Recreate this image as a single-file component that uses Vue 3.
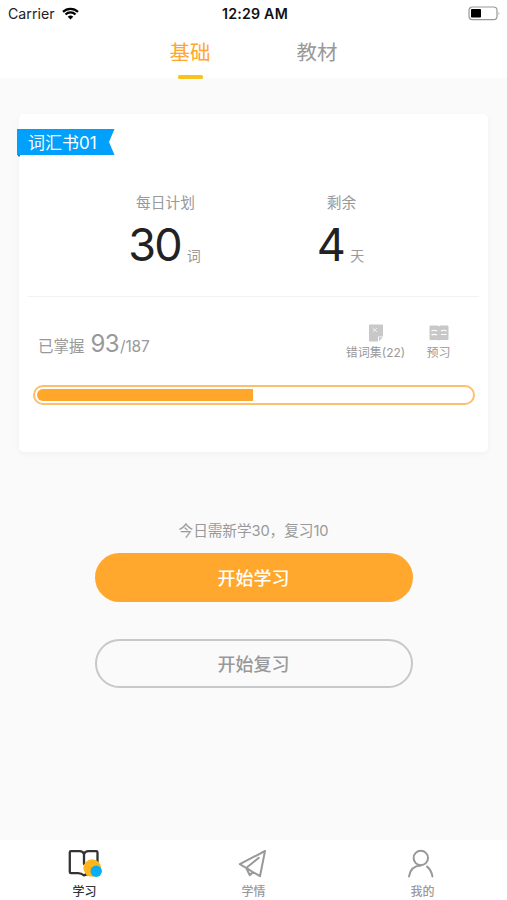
<template>
    <div class="page">
        <div class="status-bar">
            <div class="carrier">
                <span>Carrier</span>
                <svg class="wifi" viewBox="0 0 17 13">
                    <path d="M1 4.9 A10.6 10.6 0 0 1 16 4.9" />
                    <path d="M3.5 7.5 A7.1 7.1 0 0 1 13.5 7.5" />
                    <path class="dot" d="M8.5 12.6 L5.7 9.8 A4 4 0 0 1 11.3 9.8 Z" />
                </svg>
            </div>
            <span class="time">12:29 AM</span>
            <svg class="battery" viewBox="0 0 33 15">
                <rect class="shell" x="1" y="1" width="28" height="12.6" rx="3.4" />
                <rect x="3" y="3" width="10" height="8.6" rx="0.8" />
                <path class="cap" d="M30.6 5.4 Q32.4 7.3 30.6 9.2 Z" />
            </svg>
        </div>

        <div class="tabs">
            <div v-for="tab in tabs" :key="tab" class="tab" :class="{ active: tab === activeTab }"
                @click="activeTab = tab">
                <span>{{ tab }}</span>
                <i></i>
            </div>
        </div>

        <div class="card">
            <div class="ribbon-row">
                <svg class="ribbon" viewBox="0 0 98 28">
                    <path class="fold" d="M0 25 H3 V27.6 H1.4 Z" />
                    <path class="band" d="M0 0 H97.5 L92 13 L97.5 26 H0 Z" />
                </svg>
                <span class="book-name">词汇书01</span>
            </div>
            <div class="stats">
                <div v-for="item in stats" :key="item.label" class="stat">
                    <p class="stat-label">{{ item.label }}</p>
                    <p class="stat-value"><b>{{ item.value }}</b><span>{{ item.unit }}</span></p>
                </div>
            </div>
            <div class="detail">
                <div class="mastered">
                    <span class="mastered-label">已掌握</span>
                    <span class="mastered-count">{{ mastered }}</span>
                    <span class="mastered-total">/{{ total }}</span>
                </div>
                <div class="tools">
                    <div class="tool">
                        <svg class="tool-icon" viewBox="0 0 20 18">
                            <path class="solid" d="M4 0.5 H16 Q17 0.5 17 1.5 V12.4 H13 Q12 12.4 12 13.4 V17.4 H4 Q3 17.4 3 16.4 V1.5 Q3 0.5 4 0.5 Z" />
                            <path class="solid" d="M13 13.2 H16.8 L13 17.2 Z" />
                            <path class="cut thin" d="M6.6 4 L11 8 M11 4 L6.6 8" />
                        </svg>
                        <span>错词集({{ wrongCount }})</span>
                    </div>
                    <div class="tool preview">
                        <svg class="tool-icon" viewBox="0 0 20 18">
                            <path class="solid" d="M1.5 1.5 H8.8 L10 2.4 L11.2 1.5 H18.5 Q19.5 1.5 19.5 2.5 V15 Q19.5 16 18.5 16 H11.2 L10 16.6 L8.8 16 H1.5 Q0.5 16 0.5 15 V2.5 Q0.5 1.5 1.5 1.5 Z" />
                            <path class="cut" d="M2.5 6.9 Q5 5.6 8 6.9 M12 6.9 Q15 5.6 17.5 6.9 M2.5 10.9 Q5 9.7 8 10.9 M12 10.5 H17.5" />
                        </svg>
                        <span>预习</span>
                    </div>
                </div>
            </div>
            <div class="progress">
                <div class="progress-inner" :style="{ width: percent + '%' }"></div>
            </div>
        </div>

        <p class="today">今日需新学30，复习10</p>
        <button class="btn primary">开始学习</button>
        <button class="btn plain">开始复习</button>

        <div class="tab-bar">
            <div class="nav current">
                <svg class="nav-icon" viewBox="0 0 36 32">
                    <path d="M17 7 Q16 4.2 12.5 4.2 H4 Q2.8 4.2 2.8 5.4 V25 Q2.8 26.2 4 26.2 H11 Q14.5 26.4 17 28.4 Q19 27.4 21 27 M17 7 Q18 4.2 21.5 4.2 H29.3 Q30.5 4.2 30.5 5.4 V15 M17 7 V17" />
                    <circle class="sun" cx="25.2" cy="21" r="8.8" />
                    <circle class="drop" cx="29.2" cy="24.2" r="5.7" />
                </svg>
                <span>学习</span>
            </div>
            <div class="nav">
                <svg class="nav-icon" viewBox="0 0 36 32">
                    <path d="M29 4 L3.8 17.2 L10.2 21 L13.8 28.2 L16.8 25 L24 29.2 Z M10.2 21 L22.8 10.8 M11.8 21.8 L16.8 25" />
                </svg>
                <span>学情</span>
            </div>
            <div class="nav">
                <svg class="nav-icon" viewBox="0 0 36 32">
                    <circle cx="15.8" cy="11" r="7.2" />
                    <path d="M4 29.4 Q5.4 19 15.8 18.4 M22 19.6 Q26.4 23 27.4 29.4" />
                </svg>
                <span>我的</span>
            </div>
        </div>
    </div>
</template>

<script setup>
import { ref, computed } from 'vue';

const tabs = ['基础', '教材'];
const activeTab = ref('基础');

const stats = [
    { label: '每日计划', value: 30, unit: '词' },
    { label: '剩余', value: 4, unit: '天' }
];

const mastered = ref(93);
const total = ref(187);
const wrongCount = ref(22);
const percent = computed(() => mastered.value / total.value * 100);
</script>

<style>
body {
    background-color: #fafafa;
}
</style>

<style scoped>
.page {
    height: 900px;
    display: flex;
    flex-direction: column;
    align-items: center;
    overflow: hidden;
    background-color: #fafafa;
    color: #999;
    font-family: Inter, "Noto Sans CJK SC", sans-serif;
}

.page * {
    box-sizing: border-box;
}

p {
    margin: 0;
}

.status-bar {
    width: 100%;
    height: 28px;
    flex: none;
    display: grid;
    grid-template-columns: 1fr auto 1fr;
    align-items: center;
    padding: 0 6px 0 8px;
    background-color: #fff;
    color: #222;
    font-size: 14.2px;
    line-height: 28px;
}

.carrier {
    display: flex;
    align-items: center;
    gap: 7px;
}

.wifi {
    width: 17px;
    height: 13px;
    margin-top: -2px;
    fill: none;
    stroke: #000;
    stroke-width: 2.2;
}

.wifi .dot {
    fill: #000;
    stroke: none;
}

.time {
    margin-left: 1px;
    color: #111;
    font-weight: 600;
    letter-spacing: 0.2px;
}

.battery {
    width: 33px;
    height: 15px;
    justify-self: end;
    margin-top: -1px;
}

.battery .shell {
    fill: none;
    stroke: #999;
    stroke-width: 1.2;
}

.battery .cap {
    fill: #999;
}

.tabs {
    width: 100%;
    height: 50px;
    flex: none;
    display: flex;
    justify-content: center;
    background-color: #fff;
}

.tab {
    width: 127px;
    display: flex;
    flex-direction: column;
    align-items: center;
    font-size: 20.5px;
    line-height: 47px;
}

.tab span {
    height: 47px;
    padding-top: 1px;
}

.tab i {
    width: 25px;
    height: 4px;
    flex: none;
    border-radius: 1.5px;
}

.active {
    color: #ffa62b;
}

.active i {
    background-color: #f8c31c;
}

.card {
    width: 469px;
    height: 338px;
    flex: none;
    margin-top: 36px;
    padding-top: 15px;
    border-radius: 5px;
    background-color: #fff;
    box-shadow: 0 2px 7px rgba(0, 0, 0, 0.04);
}

.ribbon-row {
    display: grid;
    width: 98px;
    height: 28px;
    margin-left: -2px;
    line-height: 29px;
    color: #fff;
    font-size: 17px;
}

.ribbon-row > * {
    grid-area: 1 / 1;
}

.ribbon {
    width: 98px;
    height: 28px;
}

.band {
    fill: #00a0fc;
}

.fold {
    fill: #0b73b8;
}

.book-name {
    margin-left: 11px;
    white-space: nowrap;
    z-index: 1;
}

.stats {
    height: 140px;
    margin: 0 9px;
    padding-top: 34px;
    display: flex;
    justify-content: center;
    border-bottom: 1px solid #f2f2f2;
}

.stat {
    width: 176px;
    text-align: center;
}

.stat-label {
    font-size: 14.7px;
    line-height: 24px;
}

.stat-value {
    display: flex;
    justify-content: center;
    align-items: baseline;
    gap: 6px;
    margin: 3px 2px 0 0;
    line-height: 54px;
}

.stat-value b {
    color: #222;
    font-size: 45px;
    font-weight: 400;
    letter-spacing: -1.8px;
}

.stat-value span {
    font-size: 14px;
}

.detail {
    height: 88px;
    padding: 27px 20px 0 19px;
    display: flex;
    justify-content: space-between;
}

.mastered {
    line-height: 40px;
    font-size: 15.5px;
}

.mastered-count {
    margin: 0 1px 0 6px;
    font-size: 24px;
    letter-spacing: -0.6px;
}

.mastered-total {
    letter-spacing: -0.2px;
}

.tools {
    display: flex;
}

.tool {
    width: 67px;
    display: flex;
    flex-direction: column;
    align-items: center;
    font-size: 12px;
    line-height: 22px;
    white-space: nowrap;
}

.preview {
    width: 59px;
}

.tool-icon {
    width: 20px;
    height: 18px;
    flex: none;
}

.solid {
    fill: #c8c8c8;
}

.cut {
    fill: none;
    stroke: #fff;
    stroke-width: 1.2;
}

.thin {
    stroke-width: 0.7;
}

.progress {
    height: 20px;
    margin: 0 13px 0 14px;
    padding: 2px;
    border: 2px solid #fdbf6c;
    border-radius: 10px;
}

.progress-inner {
    height: 100%;
    border-radius: 6px 0 0 6px;
    background-color: #ffa62b;
}

.today {
    margin-top: 68px;
    font-size: 14.7px;
    line-height: 22px;
    letter-spacing: -0.1px;
}

.btn {
    width: 318px;
    height: 49px;
    flex: none;
    padding: 0;
    border: none;
    border-radius: 25px;
    font-family: inherit;
    font-size: 18px;
    font-weight: 500;
}

.primary {
    margin-top: 11px;
    padding-bottom: 1px;
    background-color: #ffa82d;
    color: #fff;
}

.plain {
    margin-top: 37px;
    padding-bottom: 2px;
    border: 2px solid #c8c8c8;
    background-color: transparent;
    color: #999;
}

.tab-bar {
    width: 100%;
    height: 60px;
    flex: none;
    margin-top: auto;
    display: flex;
    background-color: #fff;
}

.nav {
    flex: 1;
    display: flex;
    flex-direction: column;
    align-items: center;
    padding-top: 7px;
    font-size: 12px;
    font-weight: 500;
    line-height: 26px;
}

.current {
    color: #333;
}

.nav-icon {
    width: 36px;
    height: 32px;
    flex: none;
    fill: none;
    stroke: currentColor;
    stroke-width: 2;
    stroke-linecap: round;
    stroke-linejoin: round;
}

.current .nav-icon {
    stroke-width: 2.3;
}

.sun {
    fill: #ffb51c;
    stroke: none;
}

.drop {
    fill: #08aef4;
    stroke: none;
}
</style>
